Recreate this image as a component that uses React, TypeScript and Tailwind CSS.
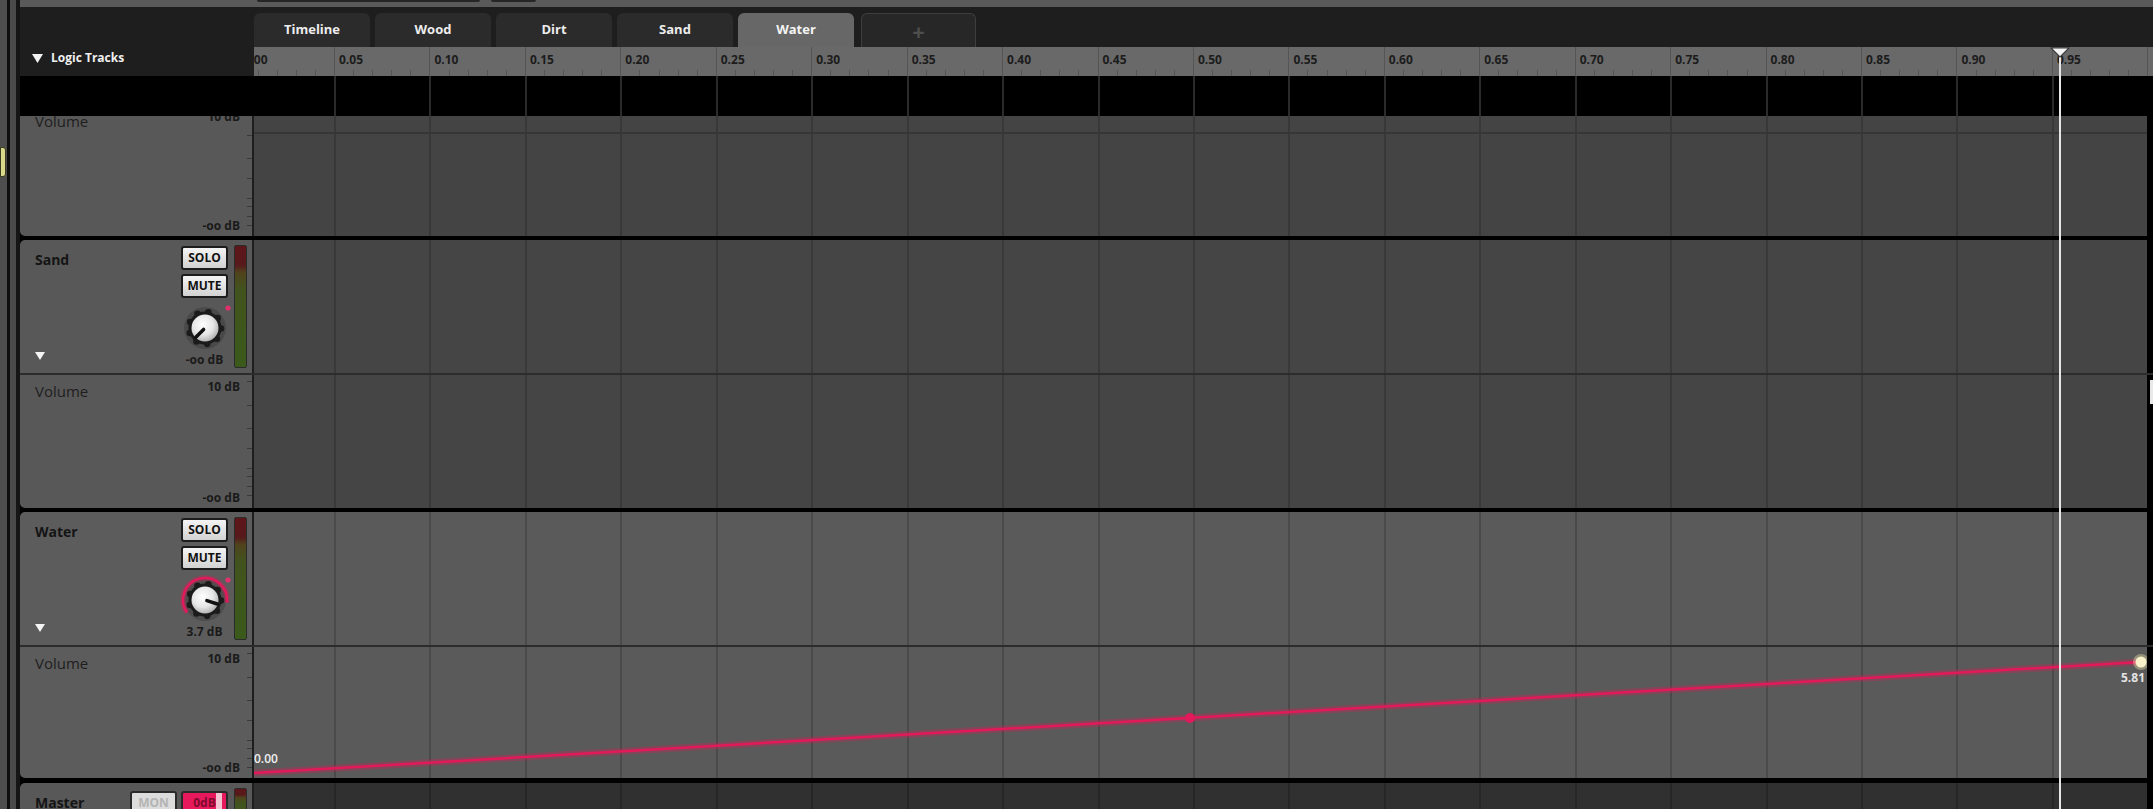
import React from "react";

const TICKS = [6, 30, 53, 73, 93, 101, 111, 120];

const Grid: React.FC<{ line: string }> = ({ line }) => (
  <div className="flex h-full -ml-[15.44px]">
    {Array.from({ length: 21 }).map((_, i) => (
      <div key={i} className={`h-full w-[95.44px] shrink-0 border-l-2 ${line}`} />
    ))}
  </div>
);

const Meter: React.FC<{ className?: string }> = ({ className = "" }) => (
  <div
    className={`w-[13px] shrink-0 rounded-[2px] border border-[#2b2b2b] bg-[linear-gradient(to_bottom,#5e1519_0%,#571a1c_16%,#4f431d_22%,#42531d_36%,#3a5a1b_100%)] ${className}`}
  />
);

const Btn: React.FC<{ children: React.ReactNode; className?: string }> = ({ children, className = "" }) => (
  <div
    className={`flex h-[24px] w-[47px] shrink-0 items-center justify-center rounded-[3px] border-2 border-[#1c1c1c] bg-[linear-gradient(to_bottom,#f4f4f4,#d2d2d2)] text-[12px] font-bold leading-none text-[#111] ${className}`}
  >
    {children}
  </div>
);

const Knob: React.FC<{ angle: number; active?: boolean }> = ({ angle, active }) => {
  const c = 36;
  const pt = (a: number, r: number) => {
    const t = (a * Math.PI) / 180;
    return [c + r * Math.sin(t), c - r * Math.cos(t)];
  };
  const [x1, y1] = pt(angle, 2);
  const [x2, y2] = pt(angle, 13);
  const bumps = Array.from({ length: 9 }).map((_, i) => pt(i * 40 + 12, 16));
  const [ax, ay] = pt(235, 22);
  const [bx, by] = pt(97, 22);
  const arc = `M ${ax} ${ay} A 22 22 0 1 1 ${bx} ${by}`;
  return (
    <svg width="72" height="72" viewBox="0 0 72 72" className="shrink-0">
      <defs>
        <radialGradient id="knobFace" cx="42%" cy="38%" r="70%">
          <stop offset="0%" stopColor="#ffffff" />
          <stop offset="55%" stopColor="#e6e6e6" />
          <stop offset="100%" stopColor="#a4a4a4" />
        </radialGradient>
      </defs>
      <circle cx={c} cy={c} r="21" fill="#000" opacity="0.16" />
      {active && (
        <>
          <path d={arc} stroke="#e0195a" strokeOpacity="0.3" strokeWidth="6" fill="none" />
          <path d={arc} stroke="#e2195b" strokeWidth="2.5" fill="none" />
        </>
      )}
      <circle cx={c} cy={c} r="16.5" fill="#1b1b1b" />
      {bumps.map(([x, y], i) => (
        <circle key={i} cx={x} cy={y} r="3.3" fill="#1b1b1b" />
      ))}
      <circle cx={c} cy={c} r="13.5" fill="url(#knobFace)" />
      <line x1={x1} y1={y1} x2={x2} y2={y2} stroke="#111" strokeWidth="3.5" strokeLinecap="round" />
      <circle cx={c + 23} cy={c - 20} r="2.6" fill="#e2306b" />
    </svg>
  );
};

const TrackHeader: React.FC<{ name: string; value: string; angle: number; active?: boolean; panel: string }> = ({
  name,
  value,
  angle,
  active,
  panel,
}) => (
  <div className={`flex h-full rounded-tl-[5px] ${panel}`}>
    <div className="flex flex-1 flex-col justify-between pl-[15px] pt-[11px] pb-[13px]">
      <span className="text-[14px] font-bold leading-[18px] text-[#141414]">{name}</span>
      <svg width="10" height="8" viewBox="0 0 10 8">
        <polygon points="0,0 10,0 5,8" fill="#f4f4f4" />
      </svg>
    </div>
    <div className="flex w-[47px] shrink-0 flex-col items-center pt-[6px]">
      <Btn>SOLO</Btn>
      <Btn className="mt-[4px]">MUTE</Btn>
      <div className="-mt-[6px] flex w-full justify-center">
        <Knob angle={angle} active={active} />
      </div>
      <span className="-mt-[11px] whitespace-nowrap text-[12px] font-bold leading-[14px] text-[#1a1a1a]">{value}</span>
    </div>
    <div className="w-[6px] shrink-0" />
    <Meter className="mt-[5px] h-[123px]" />
    <div className="w-[5px] shrink-0" />
  </div>
);

const VolumeLeft: React.FC<{ panel: string; h: number }> = ({ panel, h }) => (
  <div className={`flex h-full rounded-bl-[5px] ${panel}`}>
    <div className="flex-1 pl-[15px] pt-[6px] text-[15px] leading-[20px] text-[#1e1e1e]">Volume</div>
    <div className="flex flex-col items-end justify-between pt-[5px] pb-[3px] text-[12px] font-bold leading-[14px] text-[#1a1a1a]">
      <span>10 dB</span>
      <span>-oo dB</span>
    </div>
    <div className="w-[7px] shrink-0" />
    <svg width="5" height={h} className="shrink-0">
      {TICKS.map((t) => (
        <line key={t} x1="0" x2="5" y1={t + 0.5} y2={t + 0.5} stroke="#3a3a3a" strokeWidth="1" />
      ))}
    </svg>
  </div>
);

const Row: React.FC<{
  h: string;
  left: React.ReactNode;
  bg: string;
  line: string;
  children?: React.ReactNode;
  right?: React.ReactNode;
}> = ({ h, left, bg, line, children, right }) => (
  <div className={`flex shrink-0 ${h}`}>
    <div className="w-[232px] shrink-0">{left}</div>
    <div className="w-[2px] shrink-0 bg-[#1e1e1e]" />
    <div className={`relative w-[1893px] shrink-0 overflow-hidden ${bg}`}>
      <Grid line={line} />
      {children}
    </div>
    <div className="relative w-[6px] shrink-0 bg-black">{right}</div>
  </div>
);

const Sep: React.FC<{ h: string; color: string }> = ({ h, color }) => <div className={`w-full shrink-0 ${h} ${color}`} />;

const tabs = ["Timeline", "Wood", "Dirt", "Sand", "Water"];

export default function App() {
  return (
    <div className="flex h-[809px] w-[2153px] overflow-hidden bg-black font-['Open_Sans',sans-serif]">
      {/* left window edge */}
      <div className="flex h-full w-[20px] shrink-0">
        <div className="w-[7px] bg-[#4e4e4e]">
          <div className="mt-[147px] h-[30px] w-[6px] rounded-r-[3px] border border-[#3a3a20] bg-[#d9d98c]" />
        </div>
        <div className="w-[3px] bg-[#0e0e0e]" />
        <div className="w-[6px] bg-[#4a4a4a]" />
        <div className="w-[4px] bg-[#151515]" />
      </div>

      <div className="relative flex w-[2133px] shrink-0 flex-col">
        {/* top strip */}
        <div className="flex h-[7px] shrink-0 bg-[#5a5a5a]">
          <div className="ml-[237px] h-[2px] w-[223px] rounded-b-[3px] bg-[#262626]" />
          <div className="ml-[11px] h-[2px] w-[45px] rounded-b-[3px] bg-[#262626]" />
        </div>

        {/* tabs + ruler */}
        <div className="flex h-[69px] shrink-0 bg-[#1e1e1e]">
          <div className="flex w-[234px] shrink-0 items-end pb-[10px]">
            <svg width="11" height="9" viewBox="0 0 11 9" className="ml-[12px] mb-[3px]">
              <polygon points="0,0 11,0 5.5,9" fill="#f2f2f2" />
            </svg>
            <span className="ml-[8px] text-[12px] font-bold leading-[16px] text-[#f0f0f0]">Logic Tracks</span>
          </div>
          <div className="flex w-[1899px] shrink-0 flex-col">
            <div className="flex h-[40px] items-end gap-[5px]">
              {tabs.map((t) => (
                <div
                  key={t}
                  className={`flex h-[34px] w-[116px] items-center justify-center rounded-t-[6px] text-[13px] font-bold ${
                    t === "Water" ? "bg-[#676767] text-[#f4f4f4]" : "bg-[#2b2b2b] text-[#ededed]"
                  }`}
                >
                  {t}
                </div>
              ))}
              <div className="ml-[2px] flex h-[34px] w-[115px] items-center justify-center rounded-t-[6px] border border-b-0 border-[#3e3e3e] bg-[#272727] text-[22px] font-bold leading-none text-[#4e4e4e]">
                +
              </div>
            </div>
            <div className="h-[29px] overflow-hidden bg-[#696969]">
              <div className="-ml-[15.44px] flex h-full">
                {Array.from({ length: 21 }).map((_, i) => (
                  <div key={i} className="flex h-full w-[95.44px] shrink-0 flex-col justify-between border-l border-[#555]">
                    <span className="pl-[4px] pt-[5px] text-[12px] font-bold leading-[16px] text-[#1c1c1c]">
                      {(i * 0.05).toFixed(2)}
                    </span>
                    <div className="flex h-[6px]">
                      {[0, 1, 2, 3, 4].map((j) => (
                        <div key={j} className={`h-full flex-1 ${j > 0 ? "border-l border-[#555]" : ""}`} />
                      ))}
                    </div>
                  </div>
                ))}
              </div>
            </div>
          </div>
        </div>

        {/* black band */}
        <div className="flex h-[40px] shrink-0 bg-black">
          <div className="w-[234px] shrink-0" />
          <div className="w-[1893px] shrink-0 overflow-hidden">
            <Grid line="border-[#2a2a2a]" />
          </div>
        </div>

        {/* Dirt volume (scrolled) */}
        <Row
          h="h-[120px]"
          bg="bg-[#444444]"
          line="border-[#383838]"
          left={
            <div className="h-full overflow-hidden">
              <div className="-mt-[11px] h-[131px]">
                <VolumeLeft panel="bg-[#585858]" h={131} />
              </div>
            </div>
          }
        >
          <div className="absolute left-0 right-0 top-[16px] h-[2px] bg-[#363636]" />
        </Row>
        <Sep h="h-[4px]" color="bg-black" />

        {/* Sand */}
        <Row
          h="h-[133px]"
          bg="bg-[#454545]"
          line="border-[#393939]"
          left={<TrackHeader name="Sand" value="-oo dB" angle={225} panel="bg-[#585858]" />}
        />
        <Sep h="h-[2px]" color="bg-[#2c2c2c]" />
        <Row
          h="h-[133px]"
          bg="bg-[#454545]"
          line="border-[#393939]"
          left={<VolumeLeft panel="bg-[#585858]" h={133} />}
          right={<div className="ml-[3px] mt-[5px] h-[24px] w-[3px] bg-[#e8e8e8]" />}
        />
        <Sep h="h-[4px]" color="bg-black" />

        {/* Water */}
        <Row
          h="h-[133px]"
          bg="bg-[#5a5a5a]"
          line="border-[#4a4a4a]"
          left={<TrackHeader name="Water" value="3.7 dB" angle={108} active panel="bg-[#5c5c5c]" />}
        />
        <Sep h="h-[2px]" color="bg-[#2c2c2c]" />
        <Row
          h="h-[131px]"
          bg="bg-[#5a5a5a]"
          line="border-[#4a4a4a]"
          left={<VolumeLeft panel="bg-[#5c5c5c]" h={131} />}
        >
          <svg className="absolute inset-0" width="1893" height="131" viewBox="0 0 1893 131">
            <line x1="0" y1="126" x2="1887" y2="15" stroke="#e2195b" strokeOpacity="0.3" strokeWidth="7" />
            <line x1="0" y1="126" x2="1887" y2="15" stroke="#e2195b" strokeWidth="2.5" />
            <circle cx="936" cy="71" r="5" fill="#e2195b" />
            <circle cx="1887" cy="15" r="8" fill="#fff7b8" opacity="0.35" />
            <circle cx="1887" cy="15" r="5.5" fill="#f6f1c8" />
          </svg>
          <span className="absolute left-0 top-[105px] text-[12px] font-semibold leading-[14px] text-[#f0f0f0]">0.00</span>
          <span className="absolute right-[2px] top-[24px] text-[12px] font-bold leading-[14px] text-[#e2e2e2]">5.81</span>
        </Row>
        <Sep h="h-[5px]" color="bg-black" />

        {/* Master */}
        <Row
          h="h-[40px]"
          bg="bg-[#303030]"
          line="border-[#262626]"
          left={
            <div className="flex h-full rounded-tl-[5px] bg-[#585858]">
              <div className="w-[110px] shrink-0 pl-[15px] pt-[11px] text-[14px] font-bold leading-[18px] text-[#141414]">
                Master
              </div>
              <div className="mt-[8px] flex h-[24px] w-[47px] shrink-0 items-center justify-center rounded-[3px] border-2 border-[#2a2a2a] bg-[#dcdcdc] text-[12px] font-bold text-[#b4b4b4]">
                MON
              </div>
              <div className="ml-[4px] mt-[8px] flex h-[24px] w-[47px] shrink-0 items-center justify-center rounded-[3px] border-2 border-[#2a2a2a] bg-[linear-gradient(to_right,#e8185c_0%,#e8185c_76%,#f2c4d2_76%,#f2c4d2_90%,#e8185c_90%)] text-[12px] font-bold text-[#7e0a2e]">
                0dB
              </div>
              <div className="flex-1" />
              <Meter className="mt-[5px] h-[40px]" />
              <div className="w-[5px] shrink-0" />
            </div>
          }
        />

        {/* playhead */}
        <div className="absolute bottom-0 left-[2039px] top-[50px] w-[2px] bg-[#e6e6e6]" />
        <svg className="absolute left-[2030px] top-[47px]" width="20" height="11" viewBox="0 0 20 11">
          <polygon points="1,1 19,1 10,10" fill="#f4f4f4" stroke="#3a3a3a" strokeWidth="1.2" />
        </svg>
      </div>
    </div>
  );
}
